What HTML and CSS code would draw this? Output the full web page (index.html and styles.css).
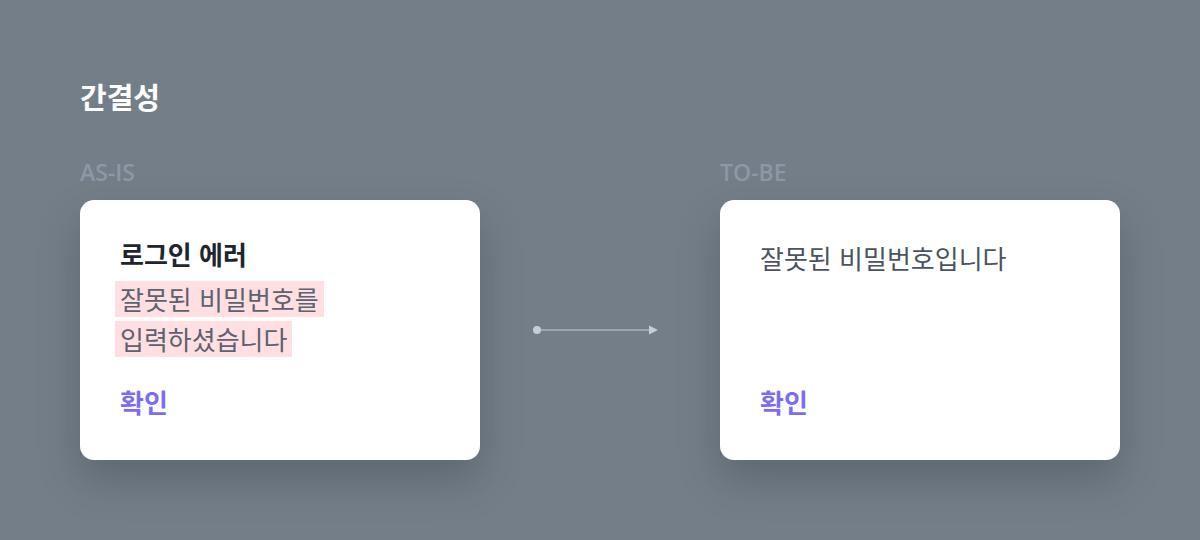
FILE: index.html
```html
<!DOCTYPE html>
<html lang="ko">
<head>
<meta charset="utf-8">
<link rel="stylesheet" href="styles.css">
</head>
<body>
<main class="page">
  <h1 class="heading">간결성</h1>
  <div class="compare">
    <section class="col">
      <div class="label">AS-IS</div>
      <div class="card">
        <div class="card-title">로그인 에러</div>
        <div class="card-body">
          <span class="hl">잘못된 비밀번호를</span>
          <span class="hl">입력하셨습니다</span>
        </div>
        <div class="card-action">확인</div>
      </div>
    </section>
    <div class="arrow">
      <svg width="130" height="12" viewBox="0 0 130 12">
        <circle cx="4" cy="6" r="4" fill="#c8ccd3"/>
        <line x1="4" y1="6" x2="118" y2="6" stroke="#c8ccd3" stroke-width="1.2"/>
        <polygon points="116,1.5 125,6 116,10.5" fill="#c8ccd3"/>
      </svg>
    </div>
    <section class="col">
      <div class="label">TO-BE</div>
      <div class="card">
        <div class="card-text">잘못된 비밀번호입니다</div>
        <div class="card-action">확인</div>
      </div>
    </section>
  </div>
</main>
</body>
</html>
```
FILE: styles.css
```css
html, body {
  margin: 0;
  padding: 0;
}
body {
  background: #747e88;
  font-family: "Noto Sans CJK KR", "Noto Sans", sans-serif;
  width: 1200px;
  height: 540px;
  overflow: hidden;
}
.page {
  padding: 78px 80px 0 80px;
}
.heading {
  margin: 0;
  font-size: 29px;
  line-height: 36px;
  font-weight: 700;
  color: #ffffff;
}
.compare {
  display: flex;
  margin-top: 45px;
}
.col {
  width: 400px;
  display: flex;
  flex-direction: column;
}
.label {
  font-family: "Open Sans", "Noto Sans", sans-serif;
  font-size: 23px;
  line-height: 26px;
  font-weight: 600;
  color: #8d97a6;
  height: 26px;
  margin-bottom: 15px;
}
.card {
  height: 260px;
  box-sizing: border-box;
  background: #ffffff;
  border-radius: 14px;
  padding: 38px 40px 42px 40px;
  display: flex;
  flex-direction: column;
  box-shadow: 0 20px 40px rgba(40, 46, 54, 0.28);
}
.card-title {
  font-size: 26px;
  line-height: 32px;
  font-weight: 700;
  color: #1e252e;
}
.card-body {
  margin-top: 11px;
  display: flex;
  flex-direction: column;
  align-items: flex-start;
  gap: 4px;
  margin-left: -5px;
}
.hl {
  display: block;
  background: #ffdfe1;
  font-size: 26px;
  line-height: 36px;
  height: 36px;
  padding: 0 5px;
  color: #5b6270;
}
.card-text {
  margin-top: 4px;
  font-size: 26px;
  line-height: 32px;
  color: #4b5360;
}
.card-action {
  margin-top: auto;
  font-size: 26px;
  line-height: 32px;
  font-weight: 700;
  color: #7b6cf6;
}
.arrow {
  width: 240px;
  display: flex;
  align-items: center;
  justify-content: flex-start;
  padding-top: 41px;
  padding-left: 53px;
  box-sizing: border-box;
}
```
